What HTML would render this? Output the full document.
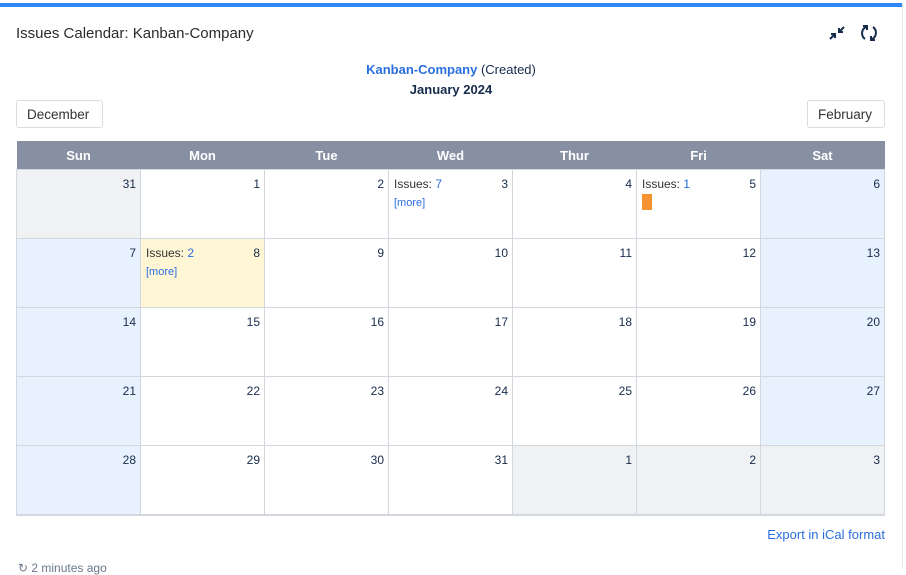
<!DOCTYPE html><html><head><style>
body{margin:0;width:906px;height:569px;overflow:hidden;background:#fff;font-family:"Liberation Sans",sans-serif;color:#172b4d;position:relative}
.bar{position:absolute;left:0;top:3px;width:902px;height:4px;background:#2f86f6}
.edge{position:absolute;left:902px;top:3px;width:1px;height:566px;background:#e4e6ea}
.title{position:absolute;left:16px;top:25px;font-size:15px;color:#2b2b2b}
.c{position:absolute;left:0;width:902px;text-align:center;font-size:13px}
.btn{position:absolute;top:100px;height:28px;border:1px solid #d9dce1;border-radius:3px;font-size:13.5px;line-height:28px;padding:0 10px;color:#333;box-sizing:border-box}
table{position:absolute;left:16px;top:141px;border-collapse:collapse;table-layout:fixed;width:869px}
th{background:#8790a3;color:#fff;height:28px;font-size:13px;padding:0;width:124px}
td{height:68px;border:1px solid #d3d7de;vertical-align:top;padding:0;position:relative;font-size:12px}
td .n{position:absolute;right:4px;top:7px}
.g{background:#f0f1f3}.w{background:#e8f2fe}.y{background:#fff6d6}
.i{position:absolute;left:5px;top:7px;color:#333}.i b{font-weight:normal;color:#2a6ede}
.m{position:absolute;left:5px;top:27px;font-size:11px;color:#2a6ede}
.o{position:absolute;left:5px;top:24px;width:10px;height:16px;background:#f79232}
a{color:#2a6ede;text-decoration:none}
</style></head><body>
<div class="bar"></div><div class="edge"></div>
<div class="title">Issues Calendar: Kanban-Company</div>
<svg style="position:absolute;left:828px;top:25px" width="18" height="16" viewBox="0 0 18 16" fill="none" stroke="#172b4d" stroke-width="2"><path d="M2 14L7 9M3 9H7V13M16 2L11 7M11 3V7H15"/></svg>
<svg style="position:absolute;left:860px;top:24px" width="18" height="18" viewBox="0 0 18 18" fill="none" stroke="#172b4d" stroke-width="2"><path d="M5 15A7 7 0 0 1 6 3M13 3A7 7 0 0 1 12 15M3 2H7V6M15 16H11V12"/></svg>
<div class="c" style="top:62px"><a style="font-weight:bold">Kanban-Company</a> (Created)</div>
<div class="c" style="top:82px;font-weight:bold">January 2024</div>
<div class="btn" style="left:16px;width:87px">December</div>
<div class="btn" style="left:807px;width:78px">February</div>
<table><tr><th>Sun</th><th>Mon</th><th>Tue</th><th>Wed</th><th>Thur</th><th>Fri</th><th>Sat</th></tr>
<tr><td class="g"><span class="n">31</span></td><td><span class="n">1</span></td><td><span class="n">2</span></td><td><span class="i">Issues: <b>7</b></span><span class="m">[more]</span><span class="n">3</span></td><td><span class="n">4</span></td><td><span class="i">Issues: <b>1</b></span><span class="o"></span><span class="n">5</span></td><td class="w"><span class="n">6</span></td></tr>
<tr><td class="w"><span class="n">7</span></td><td class="y"><span class="i">Issues: <b>2</b></span><span class="m">[more]</span><span class="n">8</span></td><td><span class="n">9</span></td><td><span class="n">10</span></td><td><span class="n">11</span></td><td><span class="n">12</span></td><td class="w"><span class="n">13</span></td></tr>
<tr><td class="w"><span class="n">14</span></td><td><span class="n">15</span></td><td><span class="n">16</span></td><td><span class="n">17</span></td><td><span class="n">18</span></td><td><span class="n">19</span></td><td class="w"><span class="n">20</span></td></tr>
<tr><td class="w"><span class="n">21</span></td><td><span class="n">22</span></td><td><span class="n">23</span></td><td><span class="n">24</span></td><td><span class="n">25</span></td><td><span class="n">26</span></td><td class="w"><span class="n">27</span></td></tr>
<tr><td class="w"><span class="n">28</span></td><td><span class="n">29</span></td><td><span class="n">30</span></td><td><span class="n">31</span></td><td class="g"><span class="n">1</span></td><td class="g"><span class="n">2</span></td><td class="g"><span class="n">3</span></td></tr>
</table>
<div style="position:absolute;left:16px;top:514px;width:869px;height:2px;background:#d3d7de"></div>
<a style="position:absolute;right:21px;top:527px;font-size:13px">Export in iCal format</a>
<div style="position:absolute;left:18px;top:561px;font-size:12px;color:#6b778c">↻ 2 minutes ago</div>
</body></html>
